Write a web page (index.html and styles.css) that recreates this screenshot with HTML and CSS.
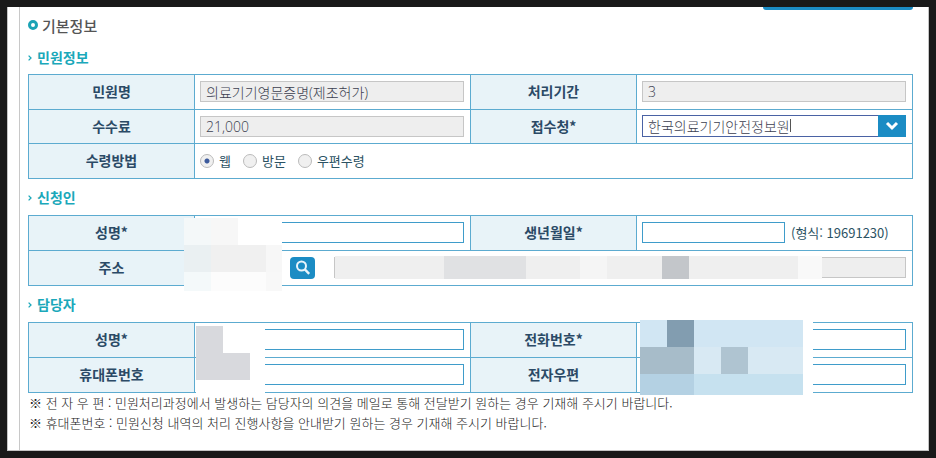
FILE: index.html
```html
<!DOCTYPE html>
<html lang="ko">
<head>
  <meta charset="UTF-8">
  <title>기본정보</title>
  <link rel="stylesheet" href="styles.css">
</head>
<body>
  <main class="page">
    <form class="content">
      <div class="toolbar">
        <button type="button" class="top-btn" aria-label="불러오기"></button>
      </div>

      <h1>
        <svg class="ring" viewBox="0 0 10 10"><circle cx="5" cy="5" r="3.5" fill="none" stroke="#1ba3b5" stroke-width="3"/></svg>
        기본정보
      </h1>

      <section>
        <h2><svg class="arrow" viewBox="0 0 4 6"><path d="M.6.6 3 3 .6 5.4" fill="none" stroke="#1ba8ba" stroke-width="1.3"/></svg>민원정보</h2>
        <table class="form-table">
          <tr>
            <th><label for="minwon">민원명</label></th>
            <td><input type="text" id="minwon" value="의료기기영문증명(제조허가)" readonly></td>
            <th><label for="period">처리기간</label></th>
            <td><input type="text" id="period" value="3" readonly></td>
          </tr>
          <tr>
            <th><label for="fee">수수료</label></th>
            <td><input type="text" id="fee" value="21,000" readonly></td>
            <th><label for="office">접수청*</label></th>
            <td>
              <div class="combo">
                <select id="office">
                  <option>한국의료기기안전정보원</option>
                </select>
                <span class="caret"></span>
                <span class="combo-arrow">
                  <svg width="14" height="10" viewBox="0 0 14 10"><path d="m2 2 5 5 5-5" fill="none" stroke="#fff" stroke-width="3"/></svg>
                </span>
              </div>
            </td>
          </tr>
          <tr>
            <th>수령방법</th>
            <td colspan="3">
              <div class="radios">
                <label><input type="radio" name="receive" checked>웹</label>
                <label><input type="radio" name="receive">방문</label>
                <label><input type="radio" name="receive">우편수령</label>
              </div>
            </td>
          </tr>
        </table>
      </section>

      <section>
        <h2><svg class="arrow" viewBox="0 0 4 6"><path d="M.6.6 3 3 .6 5.4" fill="none" stroke="#1ba8ba" stroke-width="1.3"/></svg>신청인</h2>
        <div class="table-wrap">
          <table class="form-table">
            <tr>
              <th><label for="applicant">성명*</label></th>
              <td><input type="text" id="applicant"></td>
              <th><label for="birth">생년월일*</label></th>
              <td>
                <div class="line">
                  <input type="text" id="birth" class="birth">
                  <span>(형식: 19691230)</span>
                </div>
              </td>
            </tr>
            <tr>
              <th><label for="address">주소</label></th>
              <td colspan="3">
                <div class="line address">
                  <button type="button" class="search-btn" aria-label="주소 검색">
                    <svg width="16" height="16" viewBox="0 0 16 16"><circle cx="6.500" cy="6" r="4.500" fill="none" stroke="#e8f4fb" stroke-width="2"/><path d="m9.800 9.400 4.400 4.400" stroke="#e8f4fb" stroke-width="2.400"/></svg>
                  </button>
                  <input type="text" id="address" readonly>
                </div>
              </td>
            </tr>
          </table>
          <svg class="mask mask-name" width="98" height="73">
            <rect width="98" height="73" fill="#fff"/>
            <rect width="27" height="27" fill="#f4f8f9"/>
            <rect x="27" width="27" height="27" fill="#f7f7f7"/>
            <rect y="27" width="27" height="27" fill="#eaf0f2"/>
            <rect x="27" y="27" width="55" height="27" fill="#f0f0f0"/>
            <rect x="82" y="27" width="16" height="27" fill="#f7f7f7"/>
            <rect y="54" width="27" height="19" fill="#f4f9fa"/>
            <rect x="27" y="54" width="55" height="19" fill="#fcfcfc"/>
            <rect x="82" y="54" width="16" height="19" fill="#f8f8f8"/>
          </svg>
          <svg class="mask mask-address" width="487" height="23">
            <rect width="487" height="23" fill="#efefef"/>
            <rect x="109" width="82" height="23" fill="#e0e1e3"/>
            <rect x="245" width="27" height="23" fill="#f5f5f5"/>
            <rect x="327" width="27" height="23" fill="#c3c6ca"/>
            <rect x="463" width="24" height="23" fill="#f9f9f9"/>
          </svg>
        </div>
      </section>

      <section>
        <h2><svg class="arrow" viewBox="0 0 4 6"><path d="M.6.6 3 3 .6 5.4" fill="none" stroke="#1ba8ba" stroke-width="1.3"/></svg>담당자</h2>
        <div class="table-wrap">
          <table class="form-table">
            <tr>
              <th><label for="manager">성명*</label></th>
              <td><input type="text" id="manager"></td>
              <th><label for="phone">전화번호*</label></th>
              <td><input type="text" id="phone"></td>
            </tr>
            <tr>
              <th><label for="mobile">휴대폰번호</label></th>
              <td><input type="text" id="mobile"></td>
              <th><label for="email">전자우편</label></th>
              <td><input type="text" id="email"></td>
            </tr>
          </table>
          <svg class="mask mask-manager" width="69" height="68">
            <rect width="69" height="68" fill="#fff"/>
            <path d="M0 0h27v27h27v27H0z" fill="#d8d9dd"/>
          </svg>
          <svg class="mask mask-phone" width="173" height="75">
            <rect width="173" height="75" fill="#fff"/>
            <rect width="163" height="27" fill="#d1e6f3"/>
            <rect x="27" width="27" height="27" fill="#829db0"/>
            <rect y="27" width="54" height="27" fill="#a7bcc9"/>
            <rect x="54" y="27" width="109" height="27" fill="#d8e9f3"/>
            <rect x="81" y="27" width="27" height="27" fill="#afc4d1"/>
            <rect y="54" width="54" height="21" fill="#b4d1e3"/>
            <rect x="54" y="54" width="109" height="21" fill="#c6e1ef"/>
          </svg>
        </div>
        <ul class="notes">
          <li>※ 전 자 우 편 : 민원처리과정에서 발생하는 담당자의 의견을 메일로 통해 전달받기 원하는 경우 기재해 주시기 바랍니다.</li>
          <li>※ 휴대폰번호 : 민원신청 내역의 처리 진행사항을 안내받기 원하는 경우 기재해 주시기 바랍니다.</li>
        </ul>
      </section>
    </form>
  </main>
</body>
</html>
```

FILE: styles.css
```css
* {
  box-sizing: border-box;
  margin: 0;
  padding: 0;
}
body {
  display: flex;
  min-height: 100vh;
  padding: 7px;
  background: #191919;
  font-family: "Noto Sans CJK KR", sans-serif;
  font-size: 13px;
  color: #2b5263;
}
.page {
  flex: 1;
  padding-left: 11px;
  background: #fff;
  border: 1px solid #c4c4c4;
  border-top: 0;
}
.content {
  height: 100%;
  padding: 0 15px 0 8px;
  border-left: 1px solid #c8c8c8;
}
.toolbar {
  display: flex;
  justify-content: flex-end;
}
.top-btn {
  width: 150px;
  height: 3px;
  border: 0;
  border-radius: 0 0 4px 4px;
  background: #1b8cc4;
}

/* Headings */
h1 {
  display: flex;
  align-items: center;
  gap: 4px;
  height: 30px;
  font-size: 15px;
  font-weight: 500;
  color: #555;
}
h2 {
  display: flex;
  align-items: center;
  gap: 5px;
  height: 34px;
  font-size: 14px;
  font-weight: 700;
  color: #1ba8ba;
}
section + section h2 {
  height: 36px;
}
.ring {
  width: 10px;
  height: 10px;
}
.arrow {
  width: 4px;
  height: 6px;
  margin-top: 2px;
}

/* Form tables */
.table-wrap {
  position: relative;
}
.form-table {
  width: 100%;
  table-layout: fixed;
  border-collapse: collapse;
}
.form-table th,
.form-table td {
  height: 35px;
  border: 1px solid #5cabd0;
}
.form-table tr:nth-child(2):not(:last-child) > * {
  height: 34px;
}
.form-table th {
  width: 166px;
  padding-bottom: 2px;
  background: #e8f3f8;
  font-size: 14px;
  font-weight: 700;
  line-height: 20px;
  color: #2b4a66;
}
.form-table td {
  padding: 0 6px 1px 5px;
}
input[type="text"] {
  display: block;
  width: 100%;
  height: 21px;
  padding: 0 5px;
  border: 1px solid #3f9cca;
  background: #fff;
  font: 300 14px "Open Sans", "Noto Sans CJK KR", sans-serif;
  color: #3c3e50;
}
input[readonly] {
  border-color: #c6c6c6;
  background: #eee;
}
.line {
  display: flex;
  align-items: center;
  gap: 6px;
}
.line .birth {
  width: 143px;
}
.address {
  gap: 19px;
  padding-left: 90px;
}
.address input {
  flex: 1;
}
.search-btn {
  display: flex;
  align-items: center;
  justify-content: center;
  width: 25px;
  height: 22px;
  border: 0;
  border-radius: 4px;
  background: #1b8cc4;
}

/* Office combo box */
.combo {
  display: flex;
  position: relative;
}
.combo select {
  width: 100%;
  height: 22px;
  padding: 0 33px 2px 5px;
  appearance: none;
  border: 1px solid #4a62a4;
  border-radius: 0;
  background: #fff;
  font: 300 14px "Noto Sans CJK KR", sans-serif;
  color: #3c3e50;
}
.combo-arrow {
  display: flex;
  position: absolute;
  top: 0;
  right: 0;
  align-items: center;
  justify-content: center;
  width: 28px;
  height: 22px;
  background: #1b8cc4;
  pointer-events: none;
}
.caret {
  position: absolute;
  top: 4px;
  left: 148px;
  width: 1px;
  height: 13px;
  background: #555;
}

/* Radios */
.radios {
  display: flex;
  gap: 12px;
}
.radios label {
  display: flex;
  align-items: center;
  gap: 5px;
}
.radios input {
  width: 14px;
  height: 14px;
  appearance: none;
  border: 1px solid #bbb;
  border-radius: 50%;
  background: #f0f0f0;
}
.radios input:checked {
  background: radial-gradient(circle, #3c5a9c 2px, #f0f0f0 3px);
}

/* Masked personal data */
.mask {
  position: absolute;
}
.mask-name {
  top: 3px;
  left: 156px;
}
.mask-address {
  top: 41px;
  left: 307px;
}
.mask-manager {
  top: 4px;
  left: 168px;
}
.mask-phone {
  top: -2px;
  right: 100px;
}

.notes {
  list-style: none;
  font-weight: 300;
  line-height: 20px;
  color: #222;
}
.notes li {
  padding-left: 1px;
}
```
